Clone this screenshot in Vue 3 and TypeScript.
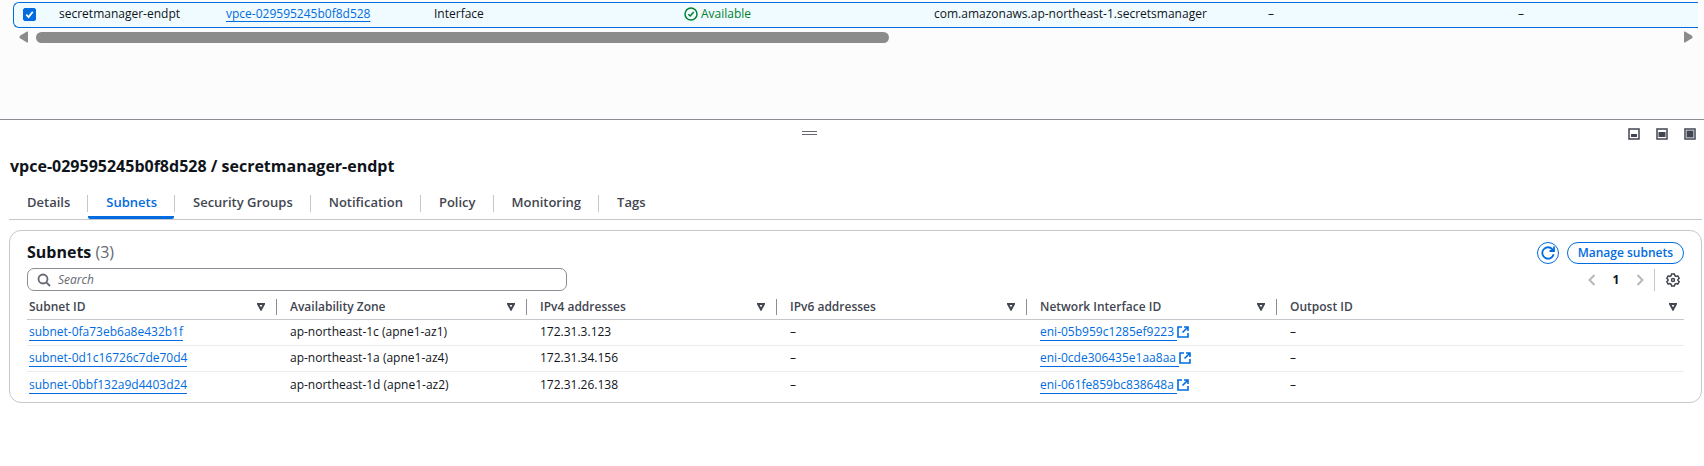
<script setup lang="ts">
import { ref } from 'vue'

interface Subnet {
  id: string
  zone: string
  ipv4: string
  ipv6: string
  eni: string
  outpost: string
}

const selected = ref(true)
const query = ref('')
const activeTab = ref('Subnets')

const tabs: string[] = ['Details', 'Subnets', 'Security Groups', 'Notification', 'Policy', 'Monitoring', 'Tags']
const columns: string[] = ['Subnet ID', 'Availability Zone', 'IPv4 addresses', 'IPv6 addresses', 'Network Interface ID', 'Outpost ID']
const subnets: Subnet[] = [
  { id: 'subnet-0fa73eb6a8e432b1f', zone: 'ap-northeast-1c (apne1-az1)', ipv4: '172.31.3.123', ipv6: '–', eni: 'eni-05b959c1285ef9223', outpost: '–' },
  { id: 'subnet-0d1c16726c7de70d4', zone: 'ap-northeast-1a (apne1-az4)', ipv4: '172.31.34.156', ipv6: '–', eni: 'eni-0cde306435e1aa8aa', outpost: '–' },
  { id: 'subnet-0bbf132a9d4403d24', zone: 'ap-northeast-1d (apne1-az2)', ipv4: '172.31.26.138', ipv6: '–', eni: 'eni-061fe859bc838648a', outpost: '–' },
]
</script>

<template>
  <main class="page">
    <section class="list-pane" aria-label="Endpoints">
      <div class="selected-row">
        <table class="endpoints">
          <colgroup>
            <col class="e-check" /><col class="e-name" /><col class="e-id" /><col class="e-mid" /><col class="e-mid" /><col class="e-service" /><col class="e-mid" /><col />
          </colgroup>
          <tbody>
            <tr>
              <td class="check-cell">
                <label class="check">
                  <input v-model="selected" type="checkbox" aria-label="Select secretmanager-endpt" />
                  <svg v-if="selected" viewBox="0 0 14 14" aria-hidden="true"><path d="M3.5 7.2 6 9.8 10.5 4" /></svg>
                </label>
              </td>
              <td>secretmanager-endpt</td>
              <td><a class="link tight" href="#endpoint">vpce-029595245b0f8d528</a></td>
              <td>Interface</td>
              <td>
                <span class="status">
                  <svg viewBox="0 0 14 14" aria-hidden="true"><circle cx="7" cy="7" r="6" /><path d="M4.3 7.2 6.2 9 9.7 5" /></svg>
                  Available
                </span>
              </td>
              <td>com.amazonaws.ap-northeast-1.secretsmanager</td>
              <td>–</td>
              <td>–</td>
            </tr>
          </tbody>
        </table>
      </div>
      <div class="scrollbar">
        <button type="button" aria-label="Scroll left"><svg viewBox="0 0 10 12"><path d="M9 0h1v12H9L1 7.5Q0 6 1 4.500Z" /></svg></button>
        <div class="track"><div class="thumb"></div></div>
        <button type="button" aria-label="Scroll right"><svg viewBox="0 0 10 12"><path d="M1 0H0v12h1l8-4.500Q10 6 9 4.500Z" /></svg></button>
      </div>
    </section>

    <section class="split-pane">
      <div class="pane-bar">
        <button type="button" class="handle" aria-label="Resize panel"><i></i><i></i></button>
        <div class="pane-sizes">
          <button type="button" aria-label="Small panel"><svg viewBox="0 0 12 12"><rect class="frame" x="1" y="1" width="10" height="10" /><rect x="3" y="6" width="6" height="3" /></svg></button>
          <button type="button" aria-label="Medium panel"><svg viewBox="0 0 12 12"><rect class="frame" x="1" y="1" width="10" height="10" /><rect x="2.500" y="4" width="7" height="5" /></svg></button>
          <button type="button" aria-label="Full panel"><svg viewBox="0 0 12 12"><rect class="frame" x="1" y="1" width="10" height="10" /><rect x="2.500" y="2.500" width="7" height="7" /></svg></button>
        </div>
      </div>

      <h1>vpce-029595245b0f8d528 / secretmanager-endpt</h1>

      <nav class="tabs" role="tablist">
        <div v-for="tab in tabs" :key="tab" class="tab">
          <button type="button" role="tab" :aria-selected="tab === activeTab" :class="{ active: tab === activeTab }" @click="activeTab = tab">{{ tab }}</button>
        </div>
      </nav>

      <div class="card">
        <header class="card-head">
          <h2>Subnets <span>(3)</span></h2>
          <div class="actions">
            <button type="button" class="refresh" aria-label="Refresh">
              <svg viewBox="0 0 14 14"><path d="M12.600 8.200A5.700 5.700 0 1 1 11.400 3.300L13 4.800" /><path d="M13 .5v4.500H8.500" /></svg>
            </button>
            <button type="button" class="manage">Manage subnets</button>
          </div>
        </header>

        <div class="tools">
          <label class="search">
            <svg viewBox="0 0 14 14" aria-hidden="true"><circle cx="6" cy="6" r="4.500" /><path d="m9.300 9.300 3.700 3.700" /></svg>
            <input v-model="query" type="text" placeholder="Search" aria-label="Search subnets" />
          </label>
          <div class="pager">
            <button type="button" class="arrow" aria-label="Previous page"><svg viewBox="0 0 8 12"><path d="M6.500 1 1.500 6l5 5" /></svg></button>
            <button type="button" class="current">1</button>
            <button type="button" class="arrow" aria-label="Next page"><svg viewBox="0 0 8 12"><path d="m1.500 1 5 5-5 5" /></svg></button>
            <button type="button" class="gear" aria-label="Preferences">
              <svg viewBox="0 0 14 14"><path d="M5.600 1h2.800l.5 1.700 1.200.7 1.700-.5 1.400 2.400L12 6.500v1l1.200 1.200-1.400 2.400-1.700-.5-1.200.7L8.400 13H5.600l-.5-1.700-1.200-.7-1.700.5L.8 8.700 2 7.500v-1L.8 5.300l1.400-2.400 1.700.5 1.200-.7Z" /><circle cx="7" cy="7" r="1.500" /></svg>
            </button>
          </div>
        </div>

        <table class="subnets">
          <colgroup><col v-for="n in 5" :key="n" class="s-col" /><col /></colgroup>
          <thead>
            <tr>
              <th v-for="column in columns" :key="column" scope="col">
                <div class="th">
                  {{ column }}
                  <svg viewBox="0 0 8 8" aria-hidden="true"><path d="M1 1h6L4 6.500Z" /></svg>
                </div>
              </th>
            </tr>
          </thead>
          <tbody>
            <tr v-for="subnet in subnets" :key="subnet.id">
              <td><a class="link" href="#subnet">{{ subnet.id }}</a></td>
              <td>{{ subnet.zone }}</td>
              <td>{{ subnet.ipv4 }}</td>
              <td>{{ subnet.ipv6 }}</td>
              <td>
                <a class="external" href="#interface"><span class="link">{{ subnet.eni }}</span><svg viewBox="0 0 12 12" aria-hidden="true"><path d="M5 1H1v10h10V7M7 1h4v4M11 1 5.500 6.500" /></svg></a>
              </td>
              <td>{{ subnet.outpost }}</td>
            </tr>
          </tbody>
        </table>
      </div>
    </section>
  </main>
</template>

<style>
body {
  background: #fff;
}
</style>

<style scoped>
.page {
  --blue: #006ce0;
  --ink: #0f141a;
  --slate: #424650;
  --line: #c6c6cd;
  font: 12px/16px "Open Sans", "Noto Sans", sans-serif;
  color: var(--ink);
}
.page * {
  box-sizing: border-box;
}
svg {
  display: block;
  flex: none;
  fill: none;
  stroke: currentColor;
}
button {
  padding: 0;
  border: 0;
  background: none;
  color: inherit;
  font: inherit;
  cursor: pointer;
}
table {
  width: 100%;
  table-layout: fixed;
  border-collapse: separate;
  border-spacing: 0;
}
td,
th {
  padding: 0;
  text-align: left;
  white-space: nowrap;
}
.link {
  color: var(--blue);
  text-decoration: none;
  border-bottom: 1px solid var(--blue);
}
.tight {
  border: 0;
  text-decoration: underline;
  text-underline-offset: 3px;
}

/* endpoint list */
.list-pane {
  min-height: 120px;
  padding: 2px 6px 0 13px;
  background: #fcfcfc;
  border-bottom: 1px solid #8c8c94;
}
.selected-row {
  border: 1px solid var(--blue);
  border-right: 0;
  border-radius: 6px 0 0 6px;
  background: #f0fbff;
}
.endpoints td {
  height: 24px;
  padding-bottom: 2px;
}
.e-check { width: 45px; }
.e-name { width: 167px; }
.e-id { width: 208px; }
.e-mid { width: 250px; }
.e-service { width: 334px; }
.endpoints .check-cell {
  padding: 0 0 2px 9px;
}
.check {
  display: grid;
  width: 13px;
  height: 13px;
}
.check input,
.check svg {
  grid-area: 1 / 1;
  width: 13px;
  height: 13px;
  margin: 0;
}
.check input {
  appearance: none;
  border: 1px solid #8c8c94;
  border-radius: 2px;
}
.check input:checked {
  background: var(--blue);
  border-color: var(--blue);
}
.check svg {
  stroke: #fff;
  stroke-width: 2;
  pointer-events: none;
}
.status {
  display: flex;
  align-items: center;
  gap: 3px;
  color: #00802f;
}
.status svg {
  width: 14px;
  height: 14px;
  stroke-width: 1.5;
}
.scrollbar {
  display: flex;
  align-items: center;
  gap: 8px;
  padding: 3px 5px 0 6px;
  color: #8b8b8b;
}
.scrollbar svg {
  width: 9px;
  height: 12px;
  fill: currentColor;
  stroke: none;
}
.track {
  flex: 1;
}
.thumb {
  width: 52%;
  height: 11px;
  border-radius: 6px;
  background: #8b8b8b;
}

/* detail panel */
.split-pane {
  padding: 0 2px 0 9px;
}
.pane-bar {
  display: flex;
  align-items: center;
  height: 28px;
  color: var(--slate);
}
.handle {
  display: grid;
  gap: 2px;
  width: 15px;
  margin: 0 auto;
  padding-bottom: 2px;
}
.handle i {
  height: 1px;
  background: #656871;
}
.pane-sizes {
  display: flex;
  gap: 16px;
  padding: 0 6px 0 18px;
}
.pane-sizes svg {
  width: 12px;
  height: 12px;
  fill: currentColor;
  stroke: none;
}
.pane-sizes .frame {
  fill: none;
  stroke: currentColor;
  stroke-width: 1.5;
}
h1,
h2 {
  margin: 0;
  font-weight: 700;
  font-size: 16px;
  line-height: 20px;
}
h1 {
  padding: 8px 1px;
}
.tabs {
  display: flex;
  height: 36px;
  padding-top: 6px;
  border-bottom: 1px solid var(--line);
}
.tab {
  display: flex;
}
.tab + .tab::before {
  content: "";
  width: 1px;
  height: 17px;
  margin-top: 5px;
  background: var(--line);
}
.tab button {
  padding: 0 17px 3px 18px;
  border-bottom: 3px solid transparent;
  border-radius: 2px;
  color: var(--slate);
  font-size: 13px;
  font-weight: 600;
}
.tab button.active {
  color: var(--blue);
  border-color: var(--blue);
}
.card {
  margin-top: 10px;
  padding: 11px 17px 4px;
  border: 1px solid var(--line);
  border-radius: 12px;
}
.card-head,
.tools,
.actions,
.pager {
  display: flex;
  align-items: center;
}
.card-head,
.tools {
  justify-content: space-between;
}
h2 {
  padding-bottom: 2px;
}
h2 span {
  color: #656871;
  font-weight: 400;
}
.actions {
  gap: 8px;
  color: var(--blue);
}
.refresh,
.manage {
  display: grid;
  place-items: center;
  height: 22px;
  border: 1px solid var(--blue);
  border-radius: 11px;
  font-weight: 600;
}
.refresh {
  width: 22px;
}
.refresh svg {
  width: 14px;
  height: 14px;
  stroke-width: 1.8;
}
.manage {
  padding: 0 10px;
}
.tools {
  margin-top: 4px;
}
.search {
  display: flex;
  align-items: center;
  gap: 7px;
  width: 540px;
  height: 23px;
  padding: 0 9px;
  border: 1px solid #8c8c94;
  border-radius: 7px;
  color: #656871;
}
.search svg {
  width: 14px;
  height: 14px;
  stroke-width: 1.8;
}
.search input {
  flex: 1;
  min-width: 0;
  padding: 0;
  border: 0;
  outline: 0;
  background: none;
  font: inherit;
}
.search input::placeholder {
  color: #656871;
  font-style: italic;
  opacity: 1;
}
.arrow {
  color: #b4b4bb;
}
.arrow svg {
  width: 8px;
  height: 12px;
  stroke-width: 1.8;
}
.current {
  width: 40px;
  font-weight: 700;
}
.gear {
  display: flex;
  align-items: center;
  height: 22px;
  margin-left: 10px;
  padding: 0 4px 0 11px;
  border-left: 1px solid var(--line);
  color: var(--slate);
}
.gear svg {
  width: 14px;
  height: 14px;
  stroke-width: 1.5;
}

.s-col {
  width: 250px;
}
.subnets {
  margin-top: 3px;
}
.subnets th {
  height: 26px;
  border-bottom: 1px solid var(--line);
  color: var(--slate);
  font-weight: 600;
}
.th {
  display: flex;
  align-items: center;
  justify-content: space-between;
  height: 16px;
  padding: 0 11px 0 13px;
  border-right: 1px solid #8c8c94;
}
.th svg {
  width: 8px;
  height: 8px;
  stroke-width: 2;
}
.subnets th:last-child .th {
  border: 0;
  padding-right: 7px;
}
.subnets th:first-child .th,
.subnets td:first-child {
  padding-left: 2px;
}
.subnets td {
  height: 26px;
  padding-left: 13px;
  padding-bottom: 1px;
  border-bottom: 1px solid #ebebf0;
}
.subnets tr:last-child td {
  padding-bottom: 0;
  border: 0;
}
.external {
  display: inline-flex;
  align-items: center;
  color: var(--blue);
  text-decoration: none;
}
.external .link {
  padding-right: 3px;
}
.external svg {
  width: 12px;
  height: 12px;
  stroke-width: 1.6;
}
</style>
